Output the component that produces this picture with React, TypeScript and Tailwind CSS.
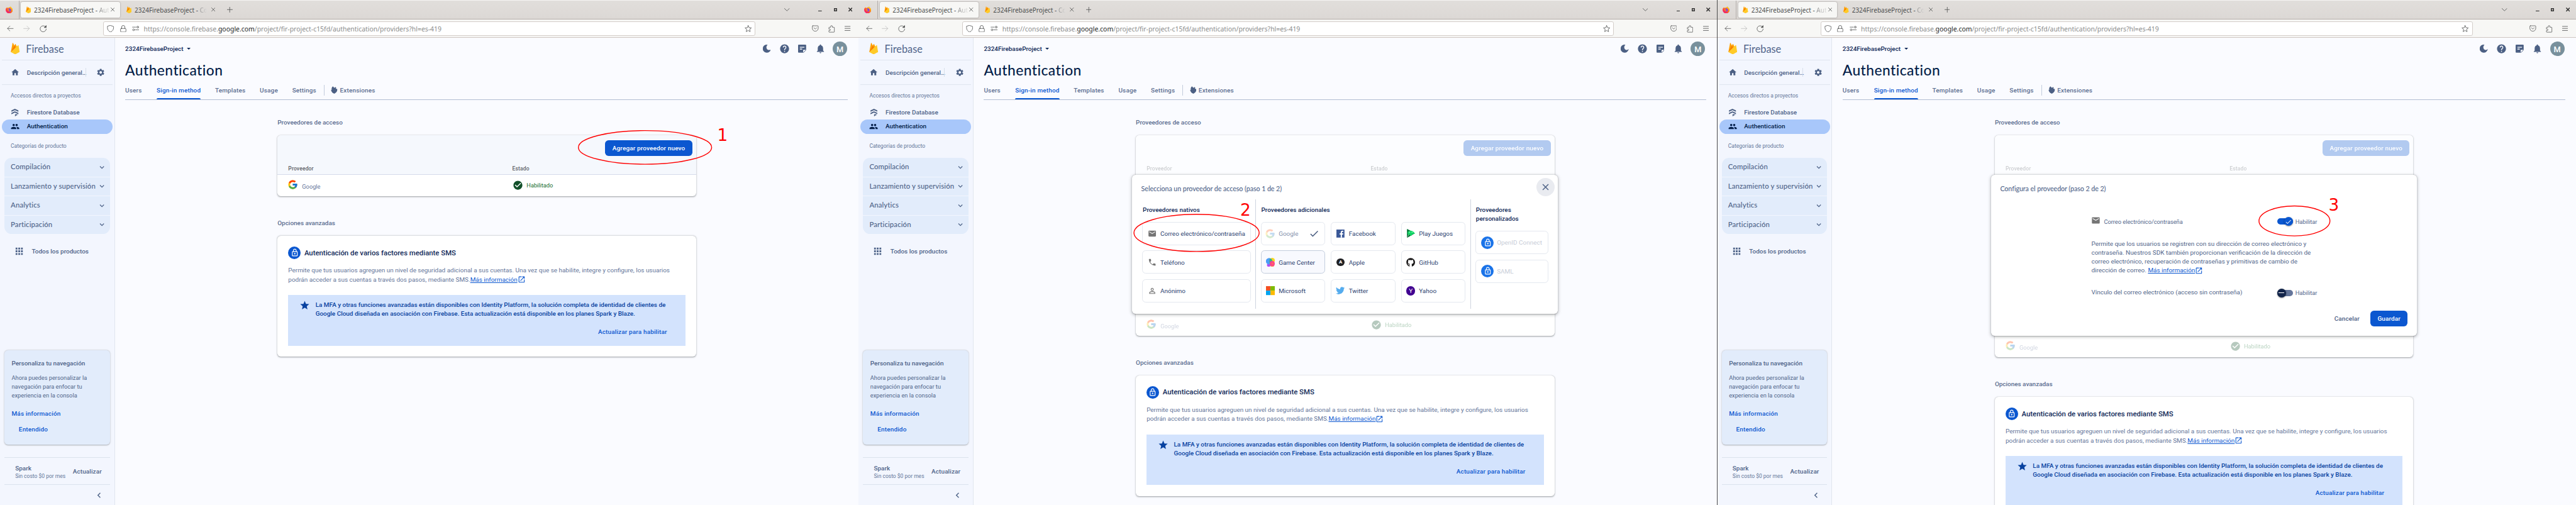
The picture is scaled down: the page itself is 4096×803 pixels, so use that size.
import type { ReactNode } from 'react';
import {
  MdApps, MdArrowDropDown, MdCheck, MdCheckCircle, MdChevronLeft, MdClose, MdEmail, MdExpandMore, MdHelp,
  MdHome, MdLockOutline, MdNotifications, MdOpenInNew, MdPeople, MdPersonOutline, MdPhone, MdSettings, MdStar,
} from 'react-icons/md';
import { FcGoogle } from 'react-icons/fc';
import { FaGithub, FaTwitter } from 'react-icons/fa';

const URL_START = 'https://console.firebase.';
const URL_END = '/project/fir-project-c15fd/authentication/providers?hl=es-419';

/* ---------- drawings ---------- */

function FirebaseFlame({ className }: { className: string }) {
  return (
    <svg viewBox="0 0 20 26" className={className}>
      <path d="M0.3 20.6 4.1 .8c.1-.6.9-.7 1.2-.2l3 5.6 1.6-3c.3-.5 1-.5 1.2 0L19.7 20.6z" fill="#ffa000" />
      <path d="M11.8 12.4 8.3 6.2.3 20.6z" fill="#f57c00" />
      <path d="M20 20.6 17.5 5.8c-.1-.5-.7-.7-1.1-.3L.3 20.6l8.900 5c.6.3 1.200.3 1.800 0z" fill="#ffca28" />
    </svg>
  );
}

function FirefoxLogo() {
  return (
    <svg viewBox="0 0 16 16" className="size-4">
      <defs>
        <linearGradient id="fx" x1="1" y1="0" x2=".2" y2="1">
          <stop offset="0" stopColor="#fff44f" />
          <stop offset=".4" stopColor="#ff980e" />
          <stop offset=".75" stopColor="#ff3647" />
          <stop offset="1" stopColor="#e31587" />
        </linearGradient>
      </defs>
      <path d="M8 16A7.9 7.9 0 0 1 0 8.2C0 6 .8 4 1.9 2.7l.6 1.1L4 2.2 4.6 3.8 6 3.4C7 2 8.500 2 9.800 2.200 10 1 10.600.300 11.200 0c.4 1.500 1.600 2.300 2.700 3.600 1.300 1.400 2 3 2 4.800A7.900 7.900 0 0 1 8 16z" fill="url(#fx)" />
      <circle cx="8.300" cy="8.200" r="3.700" fill="#7a3cf0" />
      <path d="M4.200 6.500C5.600 5.600 7.400 6 8.300 7.400c-.8.2-1.400.5-1.300 1.200.1.800 1.400 1.300 2.600.8-1 2-4 2-5 .2-.6-1-.7-2.200-.4-3.100z" fill="#ff8a16" />
    </svg>
  );
}

const STROKE = { fill: 'none', stroke: '#4a4c4c', strokeWidth: 1.1, strokeLinecap: 'round', strokeLinejoin: 'round' } as const;

function BackIcon({ className }: { className: string }) {
  return <svg viewBox="0 0 16 16" className={className} {...STROKE}><path d="M15 8H1.500M7.200 2.200 1.400 8l5.800 5.800" /></svg>;
}
function ForwardIcon({ className }: { className: string }) {
  return <svg viewBox="0 0 16 16" className={className} {...STROKE} stroke="#b9b9b9"><path d="M1 8h13.500M8.800 2.200 14.600 8l-5.800 5.800" /></svg>;
}
function ReloadIcon({ className }: { className: string }) {
  return (
    <svg viewBox="0 0 16 16" className={className} {...STROKE}>
      <path d="M12.900 3.400A6.800 6.800 0 1 0 14.800 8.600" />
      <path d="M14.700 1.300v4h-4z" fill="#4a4c4c" />
    </svg>
  );
}
function ShieldIcon() {
  return <svg viewBox="0 0 16 16" className="size-4" {...STROKE}><path d="M8 .7 14.800 3c.5 5.500-1 9.800-6.800 12.400C2.200 12.800.7 8.500 1.200 3z" /></svg>;
}
function PadlockIcon() {
  return (
    <svg viewBox="0 0 14 16" className="h-4 w-3.5" {...STROKE}>
      <rect x="1" y="7.400" width="12" height="8" rx="1.500" />
      <path d="M3.400 7.400V4.300a3.600 3.600 0 0 1 7.200 0v3.100" />
    </svg>
  );
}
function PermissionsIcon() {
  return (
    <svg viewBox="0 0 16 12" className="h-3 w-4" {...STROKE}>
      <path d="M1 3h7.500M7.500 9H15" />
      <circle cx="12.600" cy="3" r="2" />
      <circle cx="3.400" cy="9" r="2" />
    </svg>
  );
}
function BookmarkStar() {
  return <svg viewBox="0 0 16 16" className="size-4" {...STROKE}><path d="m8 .9 2.100 4.700 5 .5-3.800 3.400 1.100 5L8 12l-4.400 2.500 1.100-5L.9 6.100l5-.5z" /></svg>;
}
function PocketIcon() {
  return (
    <svg viewBox="0 0 16 16" className="size-[15px]" {...STROKE}>
      <path d="M2.200 1.500h11.600c.7 0 1.200.5 1.200 1.200v4.800a7 7 0 0 1-14 0V2.700c0-.7.5-1.200 1.200-1.200z" />
      <path d="M4.800 6.200 8 9.400l3.200-3.200" />
    </svg>
  );
}
function PuzzleIcon() {
  return <svg viewBox="0 0 16 18" className="h-[17px] w-[15px]" {...STROKE}><path d="M1.500 9V5.800c0-.5.400-.9.900-.9h3.400V3a2 2 0 0 1 4 0v1.900h3.800c.5 0 .9.400.9.900v10c0 .5-.4.900-.9.900H2.400a.9.900 0 0 1-.9-.9v-3h1.800a1.900 1.900 0 0 0 0-3.800z" /></svg>;
}
function TabCloseIcon() {
  return <svg viewBox="0 0 9 9" className="ml-[3.500px] size-[9px]" {...STROKE}><path d="m.6.600 7.800 7.800m0-7.800L.6 8.400" /></svg>;
}
function MoonIcon() {
  return <svg viewBox="0 0 18 18" className="size-[18px]" fill="#4c6084"><path d="M10.600 0a9.100 9.100 0 1 0 7.300 9.500 5.300 5.300 0 0 1-9.700-1.600C7.500 4.800 8.400 2 10.600 0z" /></svg>;
}
function NoteIcon() {
  return (
    <svg viewBox="0 0 18 18" className="size-[18px]">
      <path d="M1.800 0h14.400C17.200 0 18 .8 18 1.800V12l-6 6H1.800C.8 18 0 17.200 0 16.200V1.800C0 .8.800 0 1.800 0z" fill="#4c6084" />
      <path d="M4 5.800h10.200M4 9.800h5.200" stroke="#fafbff" strokeWidth="1.900" />
      <path d="M11.300 17.800v-5.100c0-.6.400-1 1-1h5.500z" fill="#fafbff" />
      <path d="M17.200 12.400 12 17.600" stroke="#4c6084" strokeWidth="1" />
    </svg>
  );
}
function FirestoreIcon() {
  return (
    <svg viewBox="0 0 16 17" className="h-[17px] w-4" fill="#4c6084">
      <path d="M8 0 .2 3.600v3L8 3l7.800 3.600v-3z" />
      <path d="M8 5.600.2 9.200v3L8 8.600l7.800 3.600v-3z" />
      <path d="M8.200 12.200v2.100l6.400-.1-2.700-2.300zM8.200 12.800v4l6-3.400z" />
    </svg>
  );
}
function ExtensionsIcon() {
  return (
    <svg viewBox="0 0 16 18" className="h-[17px] w-[15px]" fill="#4c6084">
      <path d="M3.200 2.200 5 .4l2 2L9 4.200 10.800 1.800 13 3.600 11.800 6l3.400.6c.5 2.200.2 4.800-1.400 6.800C12.400 15.300 10 17.200 8 17.800c-2.400-.6-4.800-2.400-6-4.600L.6 9.600c.2-1.200 1.200-2 2.400-1.800L1.600 5.600z" />
    </svg>
  );
}
function FacebookIcon() {
  return (
    <svg viewBox="0 0 18 18" className="size-[18px]">
      <path d="M0 0h18v18H0z" fill="#3b5998" />
      <path d="M12.400 18v-6.900h2.400l.4-2.800h-2.800V6.600c0-.8.2-1.400 1.400-1.400h1.500V2.700a16 16 0 0 0-2.100-.1c-2.200 0-3.600 1.300-3.600 3.700v2H7.200v2.800h2.400V18z" fill="#fff" />
    </svg>
  );
}
function PlayGamesIcon() {
  return (
    <svg viewBox="0 0 18 20" className="h-5 w-[18px]">
      <path d="M.2 0 14 6.800 4 12 .2 20z" fill="#0a7a3c" />
      <path d="M.2 20 18 9.900 8 7z" fill="#08652f" />
      <path d="M2.500 6.500c2-2.800 9-3.300 11.700-.5L18 9.900c-1.500 1.500-3.400.9-5 1.600-1.600.9-1.200 3-3 3.600-2.400.8-2.500-1.500-4.600-1.600-2.600 0-4.700-3.500-2.900-7z" fill="#10d565" />
      <path d="M6 6v3M4.500 7.500h3" stroke="#8df5b4" />
      <circle cx="11.800" cy="7.300" r="1.300" fill="#8df5b4" />
    </svg>
  );
}
function GameCenterIcon() {
  return (
    <svg viewBox="0 0 20 20" className="size-5">
      <circle cx="14" cy="5.800" r="5.800" fill="#f9d71c" />
      <circle cx="6.200" cy="16" r="4" fill="#b04cf5" />
      <circle cx="14" cy="15" r="5" fill="#ff8a4c" />
      <circle cx="7" cy="7.500" r="7.300" fill="#4a9cf8" />
      <path d="M8.600 1c-1.600 3-1.600 8.500 0 13 3.500-.8 5.700-3.500 5.700-7C14.300 4 12 1.500 8.600 1z" fill="#3fae8c" />
      <circle cx="14" cy="12.800" r="5.600" fill="#fb3d92" />
      <circle cx="14.500" cy="12.800" r="2.600" fill="#ff6a5c" />
    </svg>
  );
}
function AppleBadge() {
  return <div className="flex size-[18px] items-center justify-center rounded-full bg-[#202124] pt-px text-[11px] font-bold leading-none text-white">A</div>;
}
function YahooBadge() {
  return <div className="flex size-5 items-center justify-center rounded-full bg-[#400090] pt-px text-[14px] leading-none text-white">Y</div>;
}
function MicrosoftIcon() {
  return (
    <svg viewBox="0 0 20 20" className="size-5">
      <path d="M0 0h10v10H0z" fill="#f25022" /><path d="M10 0h10v10H10z" fill="#7fba00" />
      <path d="M0 10h10v10H0z" fill="#00a4ef" /><path d="M10 10h10v10H10z" fill="#ffb900" />
    </svg>
  );
}
function LockBadge({ className }: { className: string }) {
  return (
    <div className={`flex size-7 shrink-0 items-center justify-center rounded-full text-white ${className}`}>
      <MdLockOutline className="size-[19px]" />
    </div>
  );
}

/* ---------- browser chrome ---------- */

function TabTitle({ tail }: { tail: string }) {
  return (
    <div className="ml-[7px] flex w-[168px] overflow-hidden whitespace-nowrap pt-px font-['Noto_Sans',sans-serif] text-[14px] leading-5 tracking-[0.050px] text-[#4b4d4d]">
      2324FirebaseProject -&nbsp;
      <span className="bg-linear-to-r from-[#8f9090] to-[#e4e3e2] bg-clip-text text-transparent">{tail}</span>
    </div>
  );
}

function Chrome() {
  return (
    <header className="shrink-0">
      <div className="flex h-11 items-center border-b-[1.500px] border-t border-b-[#b5aeaa] border-t-[#f4f3f2] bg-linear-to-b from-[#e1dedb] to-[#dcd8d5]">
        <div className="flex h-full w-[43px] items-center border-r border-[#b3aeab] pl-3"><FirefoxLogo /></div>
        <div className="ml-1 flex h-9 w-[221px] items-center rounded bg-[#f7f7f5] pl-2.5 shadow-[0_0_3px_rgba(0,0,0,0.4)]">
          <FirebaseFlame className="h-4 w-3" />
          <TabTitle tail="Aut" />
          <TabCloseIcon />
        </div>
        <div className="ml-1 flex h-9 w-[221px] items-center pl-2.5">
          <FirebaseFlame className="h-4 w-3" />
          <TabTitle tail="Co" />
          <TabCloseIcon />
        </div>
        <svg viewBox="0 0 12 12" className="ml-[15px] size-3" {...STROKE}><path d="M6 0v12M0 6h12" /></svg>
        <div className="ml-auto flex items-center pr-[14px]">
          <svg viewBox="0 0 12 7" className="mr-[64px] h-[7px] w-3" {...STROKE}><path d="m.5.7 5.500 5.300L11.500.7" /></svg>
          <svg viewBox="0 0 8 8" className="mr-[26px] size-2" fill="#333"><path d="M0 5.500h8v2H0z" /></svg>
          <svg viewBox="0 0 7 7" className="mr-[26px] size-[7px]" fill="none" stroke="#333" strokeWidth="2"><path d="M1 1h5v5H1z" /></svg>
          <svg viewBox="0 0 8 8" className="size-[9px]" stroke="#333" strokeWidth="1.800"><path d="m.5.500 7 7m0-7-7 7" /></svg>
        </div>
      </div>
      <div className="flex h-[41px] items-center border-b border-[#cfc6c1] bg-[#f7f7f5] pr-[18px] pt-px">
        <BackIcon className="ml-4 size-[15px]" />
        <ForwardIcon className="ml-[21px] size-[15px]" />
        <ReloadIcon className="ml-[21px] size-4" />
        <div className="ml-[127px] flex h-8 w-[1458px] items-center rounded border border-[#d3cdc9] bg-white pl-[7px] pr-[7px]">
          <ShieldIcon />
          <div className="ml-[13px]"><PadlockIcon /></div>
          <div className="ml-[13px]"><PermissionsIcon /></div>
          <div className="ml-2.5 whitespace-nowrap font-['Noto_Sans',sans-serif] text-[14.670px] leading-5 text-[#8b8c8c]">
            {URL_START}<span className="text-[#1c1e1e]">google.com</span>{URL_END}
          </div>
          <div className="ml-auto"><BookmarkStar /></div>
        </div>
        <div className="ml-auto flex items-center gap-[21.500px]">
          <PocketIcon />
          <PuzzleIcon />
          <svg viewBox="0 0 13 12" className="h-3 w-[13px]" {...STROKE}><path d="M.6 1.400h11.800M.6 5.900h11.800M.6 10.500h11.800" /></svg>
        </div>
      </div>
    </header>
  );
}

/* ---------- sidebar ---------- */

function Sidebar() {
  return (
    <aside className="flex w-[257px] shrink-0 flex-col border-r border-[#e1e6ef] bg-[#f3f6fe] text-[14px] font-medium text-[#4f6489]">
      <div className="flex h-12 items-center pl-6">
        <FirebaseFlame className="mb-0.5 h-[26px] w-5" />
        <span className="ml-3.5 font-['Lato',sans-serif] text-[23px] font-normal leading-6 text-[#51658b]">Firebase</span>
      </div>
      <div className="mx-1 flex h-[57.500px] items-center border-y border-[#dfe5ef] pl-5">
        <MdHome className="size-5 text-[#4c6084]" />
        <span className="ml-4 whitespace-nowrap pt-[2.800px]">Descripción general…</span>
        <div className="-ml-[3px] h-5 w-px bg-[#d8dfea]" />
        <MdSettings className="ml-6 size-5 text-[#4c6084]" />
      </div>
      <div className="flex h-[45px] items-center pl-6 pt-[2.800px] text-[12px] font-normal text-[#64769a]">Accesos directos a proyectos</div>
      <div className="flex h-8 items-center pl-[26px]"><FirestoreIcon /><span className="ml-[18px] pt-px">Firestore Database</span></div>
      <div className="mx-1 flex h-8 items-center rounded-full bg-[#a8c7fa] pl-5 text-[#041e49]">
        <MdPeople className="size-5" /><span className="ml-4 pt-px">Authentication</span>
      </div>
      <div className="flex h-[54px] items-center pl-6 text-[12px] font-normal text-[#64769a]">Categorías de producto</div>
      <div className="mx-2.5 flex flex-col gap-[1.400px] overflow-hidden rounded-2xl font-['Lato',sans-serif] text-[16px]">
        {['Compilación', 'Lanzamiento y supervisión', 'Analytics', 'Participación'].map((name) => (
          <div key={name} className="flex h-[41.500px] items-center justify-between whitespace-nowrap bg-[#e2ecfb] pb-[3px] pl-3.5 pr-2 tracking-[0.170px]">
            {name}
            <MdExpandMore className="mt-0.5 size-5" />
          </div>
        ))}
      </div>
      <div className="mt-[23.500px] flex h-[30px] items-center pl-[31px]"><MdApps className="size-6" /><span className="ml-4 pt-0.5">Todos los productos</span></div>

      <div className="mx-2.5 mt-auto h-[211.500px] rounded-lg bg-[#e2ecfb] pl-4 pt-5 shadow-[0_1px_3px_rgba(60,64,67,0.4)]">
        <div className="leading-5">Personaliza tu navegación</div>
        <p className="mt-3 text-[13px] font-normal leading-5 tracking-[0.030px]">Ahora puedes personalizar la<br />navegación para enfocar tu<br />experiencia en la consola</p>
        <div className="mt-5 leading-5 tracking-[0.250px] text-[#0b57d0]">Más información</div>
        <div className="ml-4 mt-4 leading-5 tracking-[0.250px] text-[#0b57d0]">Entendido</div>
      </div>
      <div className="mx-2.5 mt-[28px] flex h-[62px] items-center justify-between border-y border-[#dbe2ed] pl-6 pr-[18px] pt-[2.800px]">
        <div>
          <div className="leading-5">Spark</div>
          <div className="whitespace-nowrap text-[12px] font-normal leading-4 text-[#64769a]">Sin costo $0 por mes</div>
        </div>
        <span className="tracking-[0.170px]">Actualizar</span>
      </div>
      <div className="flex h-[44.500px] items-center justify-end pr-[22.500px]"><MdChevronLeft className="size-6" /></div>
    </aside>
  );
}

/* ---------- page content ---------- */

const CARD = 'rounded-lg bg-white shadow-[0_1px_2px_rgba(60,64,67,0.32),0_1px_3px_1px_rgba(60,64,67,0.14)]';

function MoreInfo() {
  return (
    <span className="text-[#0b57d0]"><span className="underline underline-offset-2">Más información</span><MdOpenInNew className="inline size-[18px] align-[-4.500px]" /></span>
  );
}

function PageHeader() {
  return (
    <div className="pl-[23px] pr-6">
      <div className="flex h-12 items-center text-[#0f2857]">
        <span className="pt-[2.800px] text-[14px] font-medium">2324FirebaseProject</span>
        <MdArrowDropDown className="ml-0.5 size-5" />
        <div className="ml-auto flex items-center text-[#4c6084]">
          <MoonIcon />
          <MdHelp className="ml-[19px] size-6" />
          <div className="ml-[19px]"><NoteIcon /></div>
          <MdNotifications className="ml-[19px] size-6" />
          <div className="ml-4 mr-0.5 flex size-8 items-center justify-center rounded-full bg-[#78909c] pt-0.5 text-[18px] font-medium text-white">M</div>
        </div>
      </div>
      <h1 className="h-[46px] font-['Lato',sans-serif] text-[32px] font-medium leading-[47px] tracking-[0.650px] text-[#041e49]">Authentication</h1>
      <nav className="flex h-[44px] items-center border-b border-[#b3bed3] text-[14px] font-medium leading-5 tracking-[0.250px] text-[#5b6d90]">
        <span className="pt-[5px]">Users</span>
        <div className="relative ml-[33px] flex h-full items-center pt-[5px] text-[#0b57d0]">
          Sign-in method
          <div className="absolute inset-x-0 -bottom-px h-[3px] rounded-t bg-[#0b57d0]" />
        </div>
        <span className="ml-[32px] pt-[5px]">Templates</span>
        <span className="ml-[32px] pt-[5px]">Usage</span>
        <span className="ml-[32px] pt-[5px]">Settings</span>
        <div className="ml-[17px] mt-[3px] h-6 w-px bg-[#c3ccdc]" />
        <div className="ml-[15px] mt-[3px]"><ExtensionsIcon /></div>
        <span className="ml-[5px] pt-[5px]">Extensiones</span>
      </nav>
    </div>
  );
}

function ProvidersCard({ panel }: { panel?: ReactNode }) {
  const faded = Boolean(panel);
  const dim = faded ? 'opacity-30' : '';
  return (
    <section className={CARD}>
      <div className={`h-[87.500px] rounded-t-lg ${faded ? 'bg-[#fcfdff]' : 'border-b border-[#d5dbea] bg-[#f5f8fd]'}`}>
        <div className={`flex h-[56px] justify-end pr-[8.500px] pt-2.5 ${dim}`}>
          <div className="flex h-9 items-center rounded-lg bg-[#0b57d0] px-4 pt-[2.500px] text-[14px] font-medium tracking-[0.220px] text-white">Agregar proveedor nuevo</div>
        </div>
        <div className={`flex pl-6 pt-[9.200px] text-[12px] font-medium leading-[18px] tracking-[0.220px] text-[#5f6368] ${dim}`}>
          <span className="w-[501px]">Proveedor</span>
          <span>Estado</span>
        </div>
      </div>
      {panel}
      <div className={`flex h-12 items-center pl-6 text-[13px] leading-5 ${dim}`}>
        <div className="flex w-[501px] items-center">
          <FcGoogle className="-ml-0.5 mb-0.5 size-6" />
          <span className="ml-[9px] mt-1 pt-[2.800px] text-[#64759a]">Google</span>
        </div>
        <MdCheckCircle className="ml-px size-6 text-[#12502a]" />
        <span className="ml-[7px] pt-[2.500px] text-[#146c2e]">Habilitado</span>
      </div>
    </section>
  );
}

function AdvancedCard() {
  return (
    <section className={`h-[269.700px] shrink-0 p-6 ${CARD}`}>
      <div className="flex h-7 items-center text-[16px] font-medium text-[#0f2857]">
        <LockBadge className="bg-[#0b57d0]" />
        <span className="ml-2">Autenticación de varios factores mediante SMS</span>
      </div>
      <p className="mt-4 h-10 whitespace-nowrap text-[14px] leading-5 text-[#64759a]">
        Permite que tus usuarios agreguen un nivel de seguridad adicional a sus cuentas. Una vez que se habilite, integre y configure, los usuarios<br />
        podrán acceder a sus cuentas a través dos pasos, mediante SMS.<MoreInfo />
      </p>
      <div className="mt-6 h-[113.500px] bg-[#d3e3fd] pr-[41px] pt-[13px] text-[14px] font-medium leading-5 text-[#0842a0]">
        <div className="flex whitespace-nowrap">
          <MdStar className="ml-[25px] mr-3 mt-[-2px] size-6" />
          <p>
            La MFA y otras funciones avanzadas están disponibles con Identity Platform, la solución completa de identidad de clientes de<br />
            Google Cloud diseñada en asociación con Firebase. Esta actualización está disponible en los planes Spark y Blaze.
          </p>
        </div>
        <div className="mt-5 text-right tracking-[0.220px] text-[#0b57d0]">Actualizar para habilitar</div>
      </div>
    </section>
  );
}

/* ---------- inline dialogs ---------- */

function Dialog({ title, className, children }: { title: string; className: string; children: ReactNode }) {
  return (
    <div className={`relative -mx-2 rounded-lg bg-white shadow-[0_1px_3px_rgba(60,64,67,0.35),0_2px_6px_2px_rgba(60,64,67,0.18)] ${className}`}>
      <div className="flex h-[56px] items-center pl-5 pt-[7px]">
        <h2 className="font-['Lato',sans-serif] text-[15px] font-medium tracking-[-0.080px] text-[#51658a]">{title}</h2>
      </div>
      {children}
    </div>
  );
}

function Tile({ icon, name, className = '' }: { icon: ReactNode; name: string; className?: string }) {
  return (
    <div className={`flex h-[52px] items-center rounded-lg border text-[14px] text-[#2c4270] ${className || 'border-[#e4e8ef]'}`}>
      {icon}
      <span className="pt-[2.500px]">{name}</span>
    </div>
  );
}

function Slot({ children }: { children: ReactNode }) {
  return <div className="ml-2.5 mr-[8.500px] flex w-5 justify-center">{children}</div>;
}

function WideSlot({ children }: { children: ReactNode }) {
  return <div className="ml-[11px] mr-2 flex w-5 justify-center text-[#757575]">{children}</div>;
}

function SelectProviderDialog() {
  return (
    <Dialog title="Selecciona un proveedor de acceso (paso 1 de 2)" className="h-[312px]">
      <div className="absolute right-2 top-2 flex size-10 items-center justify-center rounded-full bg-[#e9ebf0] text-[#4c6084]"><MdClose className="size-6" /></div>
      <div className="flex h-[244px] text-[14px] leading-5">
        <div className="w-[277px] border-r border-[#ced4df] pl-[22.500px] pr-2.5 pt-[13px]">
          <div className="mb-[17px] ml-px font-medium text-[#0f2857]">Proveedores nativos</div>
          <div className="flex flex-col gap-3">
            <Tile icon={<WideSlot><MdEmail className="size-[21px]" /></WideSlot>} name="Correo electrónico/contraseña" />
            <Tile icon={<WideSlot><MdPhone className="size-5" /></WideSlot>} name="Teléfono" />
            <Tile icon={<WideSlot><MdPersonOutline className="size-6" /></WideSlot>} name="Anónimo" />
          </div>
        </div>
        <div className="w-[480px] border-r border-[#ced4df] px-[10.500px] pt-[13px]">
          <div className="mb-[17px] ml-px font-medium text-[#0f2857]">Proveedores adicionales</div>
          <div className="grid grid-cols-3 gap-x-[13px] gap-y-3">
            <div className="flex h-[52px] items-center rounded-lg border border-[#e4e8ef] text-[14px] text-[#8592ad]">
              <div className="opacity-25"><Slot><FcGoogle className="size-6 shrink-0" /></Slot></div>
              <span className="pt-[2.500px]">Google</span>
              <MdCheck className="ml-[23px] size-6 text-[#3f5479]" />
            </div>
            <Tile icon={<Slot><FacebookIcon /></Slot>} name="Facebook" />
            <Tile icon={<Slot><PlayGamesIcon /></Slot>} name="Play Juegos" />
            <Tile icon={<Slot><GameCenterIcon /></Slot>} name="Game Center" className="border-[#c3cddd] bg-[#f8f9fe]" />
            <Tile icon={<Slot><AppleBadge /></Slot>} name="Apple" />
            <Tile icon={<Slot><FaGithub className="size-5 text-[#191717]" /></Slot>} name="GitHub" />
            <Tile icon={<Slot><MicrosoftIcon /></Slot>} name="Microsoft" />
            <Tile icon={<Slot><FaTwitter className="size-5 text-[#55acee]" /></Slot>} name="Twitter" />
            <Tile icon={<Slot><YahooBadge /></Slot>} name="Yahoo" />
          </div>
        </div>
        <div className="flex-1 pl-2.5 pr-[22px] pt-[13px]">
          <div className="mb-[17px] ml-[1.500px] font-medium text-[#0f2857]">Proveedores<br />personalizados</div>
          <div className="flex flex-col gap-3 whitespace-nowrap">
            {['OpenID Connect', 'SAML'].map((name) => (
              <div key={name} className="flex h-[52px] items-center rounded-lg border border-[#e4e8ef] pl-3 text-[14px] text-[#c8cdd8]">
                <LockBadge className="bg-[#1a73e8]" /><span className="ml-[7px] pt-[2.500px]">{name}</span>
              </div>
            ))}
          </div>
        </div>
      </div>
    </Dialog>
  );
}

function ToggleOn() {
  return (
    <div className="flex h-3.5 w-9 items-center justify-end rounded-full bg-[#0b57d0]">
      <div className="flex size-5 shrink-0 items-center justify-center rounded-full bg-[#0b57d0] text-white shadow-[0_1px_3px_rgba(0,0,0,0.5)]"><MdCheck className="size-4" /></div>
    </div>
  );
}

function ToggleOff() {
  return (
    <div className="flex h-3.5 w-9 items-center rounded-full bg-[#64759a]">
      <div className="flex size-5 shrink-0 items-center justify-center rounded-full bg-[#12244a] shadow-[0_1px_3px_rgba(0,0,0,0.5)]"><div className="h-0.5 w-3 bg-white" /></div>
    </div>
  );
}

function ConfigureProviderDialog() {
  return (
    <Dialog title="Configura el proveedor (paso 2 de 2)" className="h-[360px]">
      <div className="pl-[224px] text-[14px] leading-5 text-[#51658a]">
        <div className="flex h-[98px] items-center text-[13px]">
          <MdEmail className="-ml-px mb-1 size-[21px] text-[#757575]" />
          <span className="ml-2 pt-[2.500px]">Correo electrónico/contraseña</span>
          <div className="ml-auto flex w-[313px] items-center gap-[5px]"><ToggleOn /><span className="pt-[2.500px]">Habilitar</span></div>
        </div>
        <p className="-mt-[9px] h-20 whitespace-nowrap">
          Permite que los usuarios se registren con su dirección de correo electrónico y<br />
          contraseña. Nuestros SDK también proporcionan verificación de la dirección de<br />
          correo electrónico, recuperación de contraseñas y primitivas de cambio de<br />
          dirección de correo. <MoreInfo />
        </p>
        <div className="mt-7 flex h-5 items-center">
          <span className="pt-0.5">Vínculo del correo electrónico (acceso sin contraseña)</span>
          <div className="ml-auto flex w-[313px] items-center gap-[5px] pt-[3px] text-[13px]"><ToggleOff /><span className="pt-0.5">Habilitar</span></div>
        </div>
      </div>
      <div className="mt-[31px] flex items-center justify-end pr-[21px] text-[14px] font-medium tracking-[0.180px]">
        <span className="mr-6 pt-[3px] text-[#4c6084]">Cancelar</span>
        <div className="flex h-9 items-center rounded-lg bg-[#0b57d0] px-4 pt-[3px] text-white">Guardar</div>
      </div>
    </Dialog>
  );
}

/* ---------- windows ---------- */

interface Mark { digit: string; cx: number; cy: number; rx: number; ry: number; tx: number; ty: number }

function BrowserWindow({ panel, mark, className = '' }: { panel?: ReactNode; mark: Mark; className?: string }) {
  return (
    <div className={`relative flex h-full w-[1920px] shrink-0 flex-col overflow-hidden ${className}`}>
      <Chrome />
      <div className="flex min-h-0 flex-1">
        <Sidebar />
        <main className="flex-1 overflow-hidden bg-[#fafbff]">
          <PageHeader />
          <div className="mx-auto w-[936px]">
            <h3 className="pb-[18px] pt-[42px] text-[14px] font-medium leading-5 text-[#5b6d90]">Proveedores de acceso</h3>
            <ProvidersCard panel={panel} />
            <h3 className="pb-[18px] pt-[51px] text-[14px] font-medium leading-5 text-[#5b6d90]">Opciones avanzadas</h3>
            <AdvancedCard />
          </div>
        </main>
      </div>
      <svg viewBox="0 0 1920 1129" className="pointer-events-none absolute left-0 top-0 h-[1129px] w-[1920px]">
        <ellipse cx={mark.cx} cy={mark.cy} rx={mark.rx} ry={mark.ry} fill="none" stroke="#f00" strokeWidth="2" />
        <text x={mark.tx} y={mark.ty} textAnchor="middle" fontFamily="'DejaVu Sans', sans-serif" fontSize="37" fill="#f00">{mark.digit}</text>
      </svg>
    </div>
  );
}

export default function App() {
  return (
    <div className="h-[803px] w-[4096px] overflow-hidden font-['Roboto',sans-serif]">
      <div className="flex h-[1129.300px] w-[5760px] overflow-hidden [zoom:0.71111]">
        <BrowserWindow mark={{ digit: '1', cx: 1442.3, cy: 329.6, rx: 149, ry: 37.6, tx: 1615.5, ty: 314.5 }} />
        <BrowserWindow className="border-r border-[#4a4a4a]" panel={<SelectProviderDialog />} mark={{ digit: '2', cx: 756, cy: 520.8, rx: 140, ry: 41.5, tx: 865.5, ty: 483 }} />
        <BrowserWindow panel={<ConfigureProviderDialog />} mark={{ digit: '3', cx: 1290, cy: 494, rx: 79.3, ry: 33.5, tx: 1378, ty: 471.5 }} />
      </div>
    </div>
  );
}
